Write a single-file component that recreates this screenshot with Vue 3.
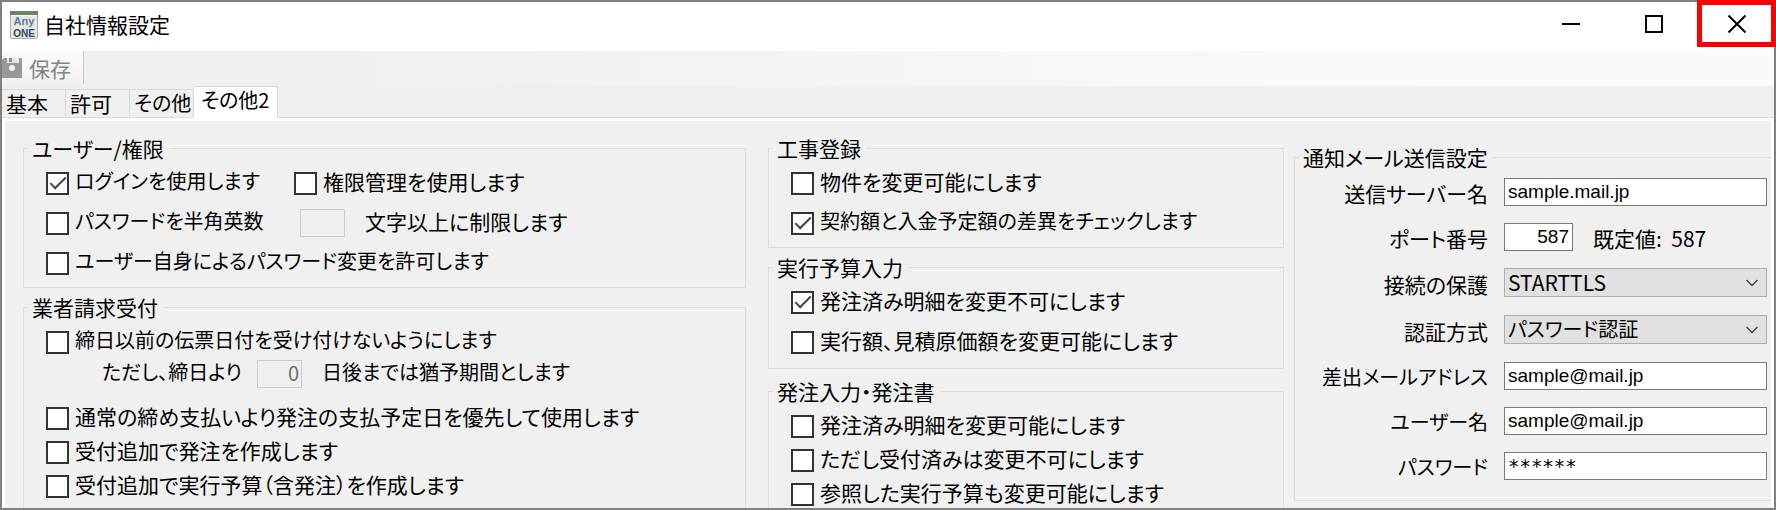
<script setup>
import { ref } from 'vue'

const tabs = ['基本', '許可', 'その他', 'その他2']
const active = ref('その他2')

const loginUsed = ref(true)
const roleUsed = ref(false)
const alnumOnly = ref(false)
const selfChange = ref(false)

const closingDate = ref(false)
const billing = ref([
  { label: '通常の締め支払いより発注の支払予定日を優先して使用します', on: false },
  { label: '受付追加で発注を作成します', on: false },
  { label: '受付追加で実行予算（含発注）を作成します', on: false },
])

const groups = ref([
  {
    title: '工事登録',
    kind: 'wide',
    items: [
      { label: '物件を変更可能にします', on: false },
      { label: '契約額と入金予定額の差異をチェックします', on: true, kana: true },
    ],
  },
  {
    title: '実行予算入力',
    kind: 'wide',
    items: [
      { label: '発注済み明細を変更不可にします', on: true },
      { label: '実行額、見積原価額を変更可能にします', on: false },
    ],
  },
  {
    title: '発注入力・発注書',
    kind: 'open',
    items: [
      { label: '発注済み明細を変更可能にします', on: false },
      { label: 'ただし受付済みは変更不可にします', on: false },
      { label: '参照した実行予算も変更可能にします', on: false },
    ],
  },
])

const mail = ref({
  server: 'sample.mail.jp',
  port: '587',
  security: 'STARTTLS',
  auth: 'パスワード認証',
  from: 'sample@mail.jp',
  user: 'sample@mail.jp',
  password: '******',
})
</script>

<template>
  <div class="window">
    <header class="titlebar">
      <svg class="app-icon" viewBox="0 0 28 28" aria-hidden="true">
        <rect x="0.5" y="0.5" width="27" height="27" rx="1" fill="#e6e8e2" stroke="#a9aca6" />
        <rect x="0" y="0" width="28" height="4" fill="#6c8560" />
        <rect x="1" y="4" width="26" height="1" fill="#f8f8f4" />
        <text x="14" y="14" text-anchor="middle" font-size="11" fill="#5f7599" class="logo">Any</text>
        <text x="14" y="26" text-anchor="middle" font-size="10" fill="#2f446c" class="logo">ONE</text>
      </svg>
      <h1>自社情報設定</h1>
      <div class="controls">
        <button type="button" aria-label="最小化">
          <svg viewBox="0 0 18 18"><path d="M0 9H18" /></svg>
        </button>
        <button type="button" aria-label="最大化">
          <svg viewBox="0 0 18 18"><rect x="1" y="1" width="16" height="16" /></svg>
        </button>
        <button type="button" class="close" aria-label="閉じる">
          <svg viewBox="0 0 18 18"><path d="M0.5 0.5L17.5 17.5M17.5 0.5L0.5 17.5" /></svg>
        </button>
      </div>
    </header>

    <div class="toolbar">
      <button type="button" class="save" disabled>
        <svg viewBox="0 0 20 20" aria-hidden="true">
          <path d="M0 2L2 0H20V20H0Z" fill="#999" />
          <path d="M5 0H17V5H5Z" fill="#e6e6e6" />
          <path d="M7 0H10V4H7Z" fill="#8c8c8c" />
          <circle cx="10" cy="10" r="3" fill="#f2f2f2" />
        </svg>
        <span>保存</span>
      </button>
    </div>

    <nav class="tabs" role="tablist">
      <button
        v-for="t in tabs"
        :key="t"
        type="button"
        role="tab"
        :aria-selected="t === active"
        :class="{ active: t === active, kana: t.startsWith('その他') }"
        @click="active = t"
      >{{ t }}</button>
    </nav>

    <main class="panel">
      <div class="col">
        <fieldset class="wide">
          <legend>ユーザー/権限</legend>
          <div class="row">
            <label class="check first kana"><input v-model="loginUsed" type="checkbox" /><span>ログインを使用します</span></label>
            <label class="check"><input v-model="roleUsed" type="checkbox" /><span>権限管理を使用します</span></label>
          </div>
          <div class="row">
            <label class="check limit kana"><input v-model="alnumOnly" type="checkbox" /><span>パスワードを半角英数</span></label>
            <input id="min-length" class="small" type="text" disabled />
            <label for="min-length" class="unit">文字以上に制限します</label>
          </div>
          <div class="row">
            <label class="check kana"><input v-model="selfChange" type="checkbox" /><span>ユーザー自身によるパスワード変更を許可します</span></label>
          </div>
        </fieldset>
        <fieldset class="open">
          <legend>業者請求受付</legend>
          <div class="row">
            <label class="check kana"><input v-model="closingDate" type="checkbox" /><span>締日以前の伝票日付を受け付けないようにします</span></label>
          </div>
          <div class="row grace kana">
            <label for="grace-days">ただし、締日より</label>
            <input id="grace-days" class="small" type="text" value="0" disabled />
            <span class="unit">日後までは猶予期間とします</span>
          </div>
          <div v-for="b in billing" :key="b.label" class="row">
            <label class="check"><input v-model="b.on" type="checkbox" /><span>{{ b.label }}</span></label>
          </div>
        </fieldset>
      </div>

      <div class="col middle">
        <fieldset v-for="g in groups" :key="g.title" :class="g.kind">
          <legend>{{ g.title }}</legend>
          <div v-for="i in g.items" :key="i.label" class="row">
            <label class="check" :class="{ kana: i.kana }"><input v-model="i.on" type="checkbox" /><span>{{ i.label }}</span></label>
          </div>
        </fieldset>
      </div>

      <div class="col last">
        <fieldset class="mail">
          <legend>通知メール送信設定</legend>
          <div class="fields">
            <label for="server">送信サーバー名</label>
            <input id="server" v-model="mail.server" type="text" />
            <label for="port">ポート番号</label>
            <div class="port">
              <input id="port" v-model="mail.port" type="text" />
              <span>既定値:&nbsp; 587</span>
            </div>
            <label for="security">接続の保護</label>
            <select id="security" v-model="mail.security">
              <option>STARTTLS</option>
            </select>
            <label for="auth">認証方式</label>
            <select id="auth" v-model="mail.auth" class="kana">
              <option>パスワード認証</option>
            </select>
            <label for="from" class="kana">差出メールアドレス</label>
            <input id="from" v-model="mail.from" type="text" />
            <label for="user" class="kana">ユーザー名</label>
            <input id="user" v-model="mail.user" type="text" />
            <label for="password" class="kana">パスワード</label>
            <input id="password" v-model="mail.password" class="secret" type="text" autocomplete="off" />
          </div>
        </fieldset>
      </div>
    </main>
  </div>
</template>

<style>
body {
  margin: 0;
}
</style>

<style scoped>
.window {
  box-sizing: border-box;
  display: flex;
  flex-direction: column;
  height: 100vh;
  border: 2px solid #808080;
  background: #f0f0f0;
  color: #000;
  font-family: "Noto Sans CJK JP", sans-serif;
  font-size: 21px;
  line-height: 24px;
  font-feature-settings: "palt";
  white-space: nowrap;
}
button,
input,
select {
  box-sizing: border-box;
  margin: 0;
  font: inherit;
  font-feature-settings: inherit;
  color: inherit;
}
button {
  padding: 0;
  border: 0;
  background: none;
}
.window .kana {
  font-size: 20px;
}

.titlebar {
  display: flex;
  flex: none;
  align-items: center;
  height: 49px;
  padding-left: 8px;
  background: #fff;
}
.app-icon {
  width: 28px;
  height: 28px;
  margin-bottom: 4px;
  overflow: visible;
}
.logo {
  font-family: "Liberation Sans", sans-serif;
  font-weight: bold;
}
h1 {
  margin: 0 auto 0 6px;
  padding-bottom: 6px;
  font-size: 21px;
  font-weight: 400;
}
.controls {
  display: flex;
  align-self: flex-start;
  margin: -2px -2px 0 0;
}
.controls button {
  display: flex;
  align-items: center;
  justify-content: center;
  width: 83px;
  height: 47px;
}
.controls .close {
  width: 79px;
  margin-left: 2px;
  border: 5px solid #f00;
}
.controls svg {
  width: 18px;
  height: 18px;
  fill: none;
  stroke: #000;
  stroke-width: 2;
}

.toolbar {
  flex: none;
  height: 35px;
  background: linear-gradient(90deg, #f0f0f0, #f0f0f0 20%, #fbfbfb 80%, #fbfbfb);
}
.save {
  display: flex;
  align-items: center;
  gap: 7px;
  width: 82px;
  height: 33px;
  border-right: 1px solid #c8c8c8;
  background: linear-gradient(#fbfbfb, #f2f2f2);
  color: #838383;
}
.save svg {
  width: 20px;
  height: 20px;
}

.tabs {
  display: flex;
  flex: none;
  align-items: flex-end;
  height: 31px;
  border-bottom: 1px solid #dcdcdc;
}
.tabs button {
  width: 64px;
  height: 28px;
  padding: 0 0 2px 4px;
  border: solid #d9d9d9;
  border-width: 1px 1px 0 0;
  text-align: left;
}
.tabs .active {
  width: 84px;
  height: 32px;
  margin: 0 0 -1px;
  padding: 0 0 5px 7px;
  background: #fff;
}

.panel {
  display: grid;
  flex: 1;
  grid-template-columns: 723fr 528fr 477fr;
  column-gap: 10px;
  min-height: 0;
  overflow: hidden;
  padding: 15px 0 0 18px;
  border: 3px solid #fff;
  border-bottom: 0;
}
.col {
  display: flex;
  flex-direction: column;
  gap: 7px;
  min-width: 0;
}
.middle {
  padding-left: 12px;
}
.last {
  padding-top: 9px;
}
fieldset {
  min-width: 0;
  margin: 0;
  padding: 3px 4px 4px;
  border: 1px solid #dcdcdc;
}
legend {
  padding: 0 5px 0 4px;
}
.row {
  display: flex;
  align-items: center;
  height: 40px;
  padding-left: 18px;
}
.open {
  flex: 1 0 auto;
  padding-top: 6px;
  border-bottom: 0;
}
.open .row {
  height: 34px;
}
.middle .wide + .wide {
  padding-bottom: 6px;
}
.middle .open {
  margin-top: 3px;
}
.check {
  display: flex;
  align-items: center;
  gap: 6px;
}
.check span,
.row .unit,
.grace label {
  padding-bottom: 4px;
}
.first {
  width: 248px;
}
.limit {
  width: 254px;
}
.check input {
  display: grid;
  place-items: center;
  width: 23px;
  height: 23px;
  appearance: none;
  border: 2px solid #333;
  background: #fff;
}
.check input:checked::before {
  content: "";
  width: 14px;
  height: 6px;
  margin-top: -5px;
  border: solid #444;
  border-width: 0 0 2px 2px;
  transform: rotate(-45deg);
}
.small {
  width: 45px;
  height: 28px;
  padding: 0 2px;
  border: 1px solid #ccc;
  background: #f0f0f0;
  color: #6d6d6d;
  text-align: right;
}
.grace .small {
  padding-bottom: 3px;
}
.unit {
  margin-left: 20px;
}
.open .grace {
  height: 30px;
  margin-bottom: 12px;
  padding-left: 74px;
}
.grace label {
  width: 155px;
}

.mail {
  padding: 0 4px 12px;
  border-right: 0;
}
.fields {
  display: grid;
  grid-template-columns: 189px 1fr;
  grid-template-rows: 45px 45px 47px 47px 45px 45px 45px;
  column-gap: 16px;
  align-items: center;
}
.fields > label {
  padding-top: 2px;
  text-align: right;
}
.fields input,
.fields select {
  width: 100%;
  height: 28px;
  padding: 0 3px;
  border: 1px solid #7a7a7a;
  border-radius: 0;
  background: #fff;
}
.fields input {
  font-family: "Liberation Sans", "Noto Sans CJK JP", sans-serif;
  font-size: 19px;
}
.fields .secret {
  font-family: "DejaVu Sans Mono", monospace;
}
.fields select {
  height: 29px;
  padding-bottom: 2px;
  appearance: none;
  border-color: #adadad;
  background: #e1e1e1 url("data:image/svg+xml,%3Csvg xmlns='http://www.w3.org/2000/svg' width='12' height='8'%3E%3Cpath d='M0.5 1L6 6.5L11.5 1' fill='none' stroke='%23444' stroke-width='1.5'/%3E%3C/svg%3E") no-repeat right 8px center;
}
.port {
  display: flex;
  align-items: center;
  gap: 20px;
}
.fields .port input {
  width: 69px;
  text-align: right;
}
.port span {
  padding-top: 2px;
}
</style>
